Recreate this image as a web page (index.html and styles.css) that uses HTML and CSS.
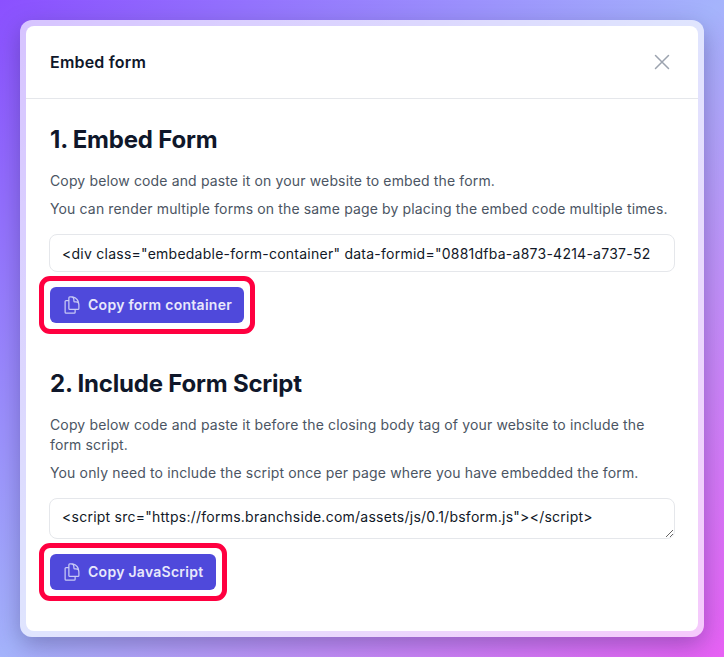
FILE: index.html
```html
<!DOCTYPE html>
<html lang="en">
<head>
  <meta charset="UTF-8">
  <meta name="viewport" content="width=device-width, initial-scale=1.0">
  <title>Embed form</title>
  <link rel="stylesheet" href="styles.css">
</head>
<body>
  <div class="frame">
    <div class="modal">
      <div class="modal-header">
        <span class="modal-title">Embed form</span>
        <svg class="close" width="24" height="24" viewBox="0 0 24 24" fill="none" stroke="#9ca3af" stroke-width="1.5" stroke-linecap="round"><path d="M5.500 5.500l13 13M18.500 5.500l-13 13"/></svg>
      </div>
      <div class="modal-body">
        <section class="step">
          <h2>1. Embed Form</h2>
          <p class="first">Copy below code and paste it on your website to embed the form.</p>
          <p>You can render multiple forms on the same page by placing the embed code multiple times.</p>
          <input class="code" type="text" readonly value="&lt;div class=&quot;embedable-form-container&quot; data-formid=&quot;0881dfba-a873-4214-a737-52">
          <button class="copy">
            <svg width="20" height="20" viewBox="0 0 24 24" fill="none" stroke="#c7c9f5" stroke-width="1.5" stroke-linecap="round" stroke-linejoin="round"><path d="M15.750 17.250v3.375c0 .621-.504 1.125-1.125 1.125h-9.750a1.125 1.125 0 0 1-1.125-1.125V7.875c0-.621.504-1.125 1.125-1.125H6.750a9 9 0 0 1 1.500.124m7.500 10.376h3.375c.621 0 1.125-.504 1.125-1.125V11.250c0-4.460-3.243-8.161-7.500-8.876a9 9 0 0 0-1.500-.124H9.375c-.621 0-1.125.504-1.125 1.125v3.500m7.500 10.375H9.375a1.125 1.125 0 0 1-1.125-1.125v-9.250m12 6.625v-1.875a3.375 3.375 0 0 0-3.375-3.375h-1.500a1.125 1.125 0 0 1-1.125-1.125v-1.500a3.375 3.375 0 0 0-3.375-3.375H9.750"/></svg>
            Copy form container
          </button>
        </section>
        <section class="step">
          <h2>2. Include Form Script</h2>
          <p class="first">Copy below code and paste it before the closing body tag of your website to include the form script.</p>
          <p>You only need to include the script once per page where you have embedded the form.</p>
          <textarea class="code area" readonly>&lt;script src="https://forms.branchside.com/assets/js/0.1/bsform.js"&gt;&lt;/script&gt;</textarea>
          <button class="copy">
            <svg width="20" height="20" viewBox="0 0 24 24" fill="none" stroke="#c7c9f5" stroke-width="1.5" stroke-linecap="round" stroke-linejoin="round"><path d="M15.750 17.250v3.375c0 .621-.504 1.125-1.125 1.125h-9.750a1.125 1.125 0 0 1-1.125-1.125V7.875c0-.621.504-1.125 1.125-1.125H6.750a9 9 0 0 1 1.500.124m7.500 10.376h3.375c.621 0 1.125-.504 1.125-1.125V11.250c0-4.460-3.243-8.161-7.500-8.876a9 9 0 0 0-1.500-.124H9.375c-.621 0-1.125.504-1.125 1.125v3.500m7.500 10.375H9.375a1.125 1.125 0 0 1-1.125-1.125v-9.250m12 6.625v-1.875a3.375 3.375 0 0 0-3.375-3.375h-1.500a1.125 1.125 0 0 1-1.125-1.125v-1.500a3.375 3.375 0 0 0-3.375-3.375H9.750"/></svg>
            Copy JavaScript
          </button>
        </section>
      </div>
    </div>
  </div>
</body>
</html>
```
FILE: styles.css
```css
* {
  box-sizing: border-box;
}
html, body {
  margin: 0;
  height: 100%;
}
body {
  width: 724px;
  height: 657px;
  overflow: hidden;
  padding: 20px;
  font-family: Inter, "Liberation Sans", sans-serif;
  background: linear-gradient(to bottom right, #8b50ff, #a5b4fc 50%, #e861f5);
}
.frame {
  height: 617px;
  padding: 6px;
  border-radius: 12px;
  background: rgba(255, 255, 255, .65);
  box-shadow: 0 8px 24px rgba(40, 30, 90, .35);
}
.modal {
  height: 605px;
  background: #fff;
  border-radius: 8px;
}
.modal-header {
  height: 73px;
  padding: 0 24px;
  display: flex;
  align-items: center;
  justify-content: space-between;
  border-bottom: 1px solid #e5e7eb;
}
.modal-title {
  font-size: 16px;
  line-height: 24px;
  font-weight: 600;
  letter-spacing: .2px;
  color: #0f172a;
}
.modal-body {
  padding: 25px 23px 0 24px;
}
.step {
  display: flex;
  flex-direction: column;
  align-items: flex-start;
  margin-bottom: 45px;
}
h2 {
  margin: 0;
  font-size: 24px;
  line-height: 32px;
  font-weight: 700;
  letter-spacing: -.2px;
  color: #0f172a;
}
p {
  margin: 8px 0 0;
  font-size: 14px;
  line-height: 20px;
  letter-spacing: .14px;
  color: #4b5563;
}
p.first {
  margin-top: 15px;
}
.code {
  display: block;
  width: 626px;
  height: 38px;
  margin: 15px 0 0 -1px;
  padding: 8px 12px;
  font-family: inherit;
  font-size: 14px;
  line-height: 20px;
  letter-spacing: .25px;
  color: #111827;
  background: #fff;
  border: 1px solid #e5e7eb;
  border-radius: 8px;
  outline: none;
}
.area {
  height: 41px;
}
.copy {
  position: relative;
  display: inline-flex;
  align-items: center;
  gap: 6px;
  height: 36px;
  margin-top: 15px;
  padding: 0 12px 1px;
  font-family: inherit;
  font-size: 14px;
  font-weight: 600;
  letter-spacing: .27px;
  color: #e8e8fb;
  background: #4f49db;
  border: 0;
  border-radius: 6px;
}
/* red annotation drawn on the screenshot */
.copy::after {
  content: "";
  position: absolute;
  inset: -11px;
  border: 5px solid #ff0040;
  border-radius: 11px;
}
```
